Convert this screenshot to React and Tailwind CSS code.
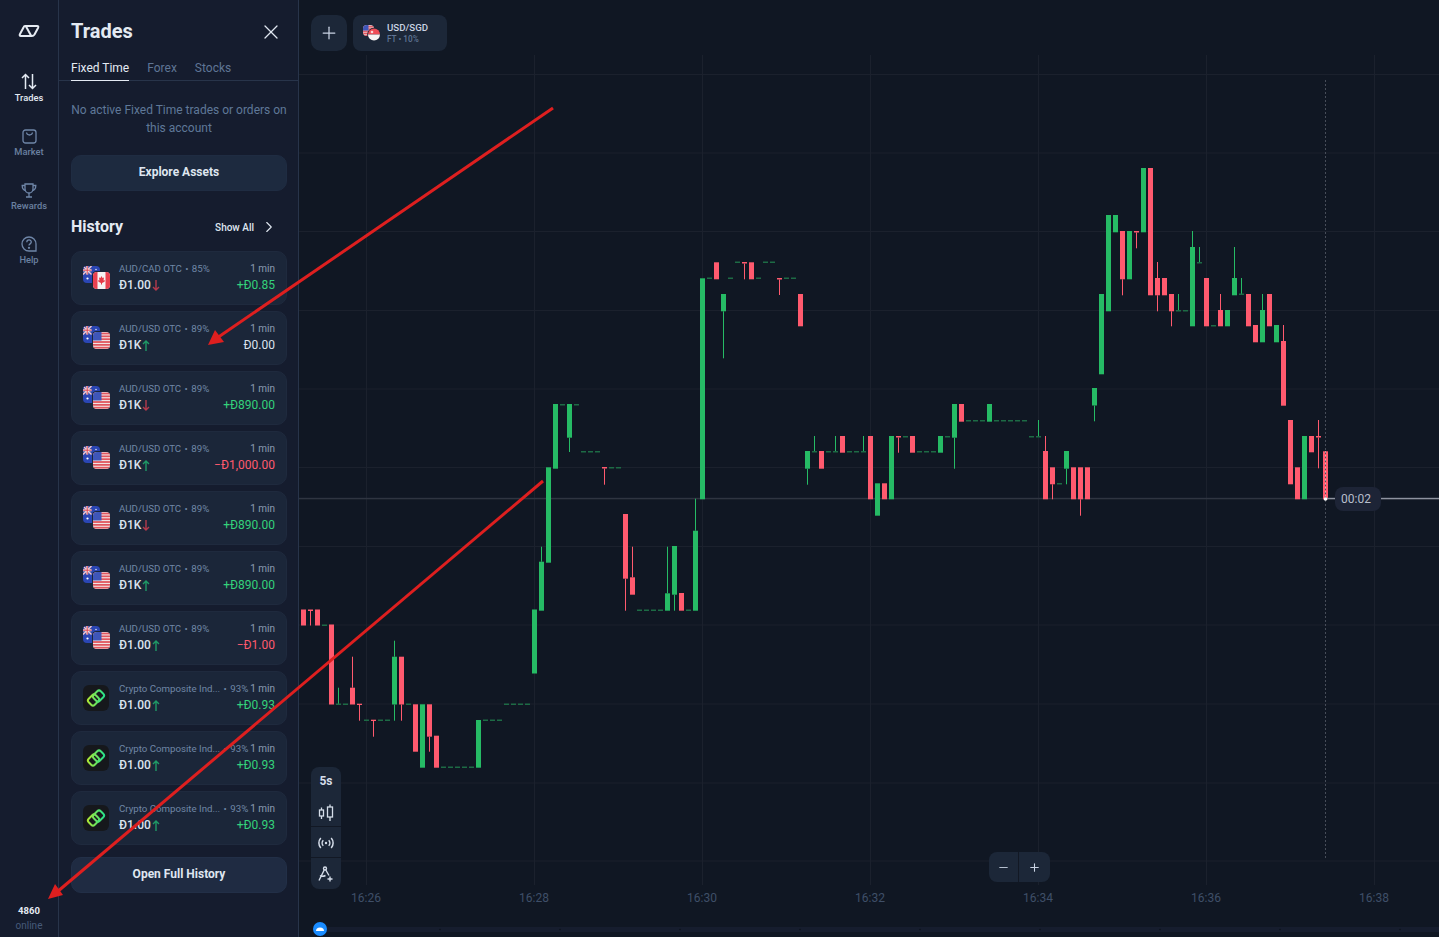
import { X, Plus, Minus, ChevronRight } from "lucide-react";

const GREEN = "#26bb65";
const RED = "#ff5a6e";
const DASH = "#1d6b45";

// [index, type, top, bottom, wickTop, wickBottom] - x is 366 + 7 * index
const candles = [
  [-9, "r", 609.5, 625.5], [-8, "r", 609.5, 611, 610, 625.5], [-7, "r", 609.5, 625.5], [-6, "d", 625],
  [-5, "r", 624.5, 704.5], [-4, "d", 704, 0, 687.7], [-3, "d", 704], [-2, "r", 687.7, 704.5, 656.7],
  [-1, "r", 703.7, 705, 0, 720.7], [0, "d", 720], [1, "r", 719.7, 721, 0, 736.7], [2, "d", 720], [3, "d", 720],
  [4, "g", 656.7, 704.5, 640.7, 720.7], [5, "r", 656.7, 704.5, 0, 720.7], [6, "d", 704],
  [7, "r", 704.3, 751.7], [8, "g", 704.3, 767.7], [9, "r", 704.3, 736.7, 0, 751.7], [10, "r", 735.7, 767.7],
  [11, "d", 767], [12, "d", 767], [13, "d", 767], [14, "d", 767], [15, "d", 767],
  [16, "g", 720, 767.7], [17, "d", 720], [18, "d", 720], [19, "d", 720],
  [20, "d", 704], [21, "d", 704], [22, "d", 704], [23, "d", 704],
  [24, "g", 609.5, 673.5], [25, "g", 561.7, 610.7, 546.7], [26, "g", 467.3, 562.7], [27, "g", 404, 468.7],
  [28, "d", 404.5], [29, "g", 404, 437.7, 0, 452], [30, "d", 404.5],
  [31, "d", 451.5], [32, "d", 451.5], [33, "d", 451.5],
  [34, "r", 467, 468.5, 0, 484.7], [35, "d", 467.5], [36, "d", 467.5],
  [37, "r", 514, 578.7, 0, 610.7], [38, "r", 577.3, 594.7, 546.7],
  [39, "d", 610], [40, "d", 610], [41, "d", 610], [42, "d", 610],
  [43, "g", 593.3, 610.7, 546.7], [44, "g", 546, 594.7, 0, 610.7], [45, "r", 593, 610.7], [46, "d", 610],
  [47, "g", 530.7, 610.7, 498.7], [48, "g", 278.3, 499.3], [49, "d", 278],
  [50, "r", 262.3, 279.3], [51, "g", 294, 311.3, 0, 358.3], [52, "d", 278], [53, "d", 262],
  [54, "r", 262, 263.5, 0, 279.3], [55, "r", 262.3, 279.3], [56, "d", 278], [57, "d", 262], [58, "d", 262],
  [59, "r", 278, 279.5, 0, 295], [60, "d", 278], [61, "d", 278], [62, "r", 294, 326.3],
  [63, "g", 451, 468.7, 0, 484.7], [64, "d", 451.5, 0, 436], [65, "r", 451, 468.7], [66, "d", 451.5],
  [67, "d", 451.5, 0, 436], [68, "r", 436, 452.7], [69, "d", 451.5], [70, "d", 451.5], [71, "d", 451.5, 0, 436],
  [72, "r", 436, 499.3], [73, "g", 483.3, 515.7], [74, "r", 483.3, 499.3], [75, "g", 436, 499.3],
  [76, "r", 436, 437.5, 0, 452.7], [77, "d", 436.5], [78, "r", 436, 452.7],
  [79, "d", 451.5], [80, "d", 451.5], [81, "d", 451.5], [82, "g", 436, 452.7], [83, "d", 436.5],
  [84, "g", 404, 437.7, 0, 468.7], [85, "r", 404, 421.7], [86, "d", 420.5], [87, "d", 420.5], [88, "d", 420.5],
  [89, "g", 404, 421.7], [90, "d", 420.5], [91, "d", 420.5], [92, "d", 420.5], [93, "d", 420.5], [94, "d", 420.5],
  [95, "d", 436.5], [96, "d", 436.5, 0, 420],
  [97, "r", 451, 499.3, 436], [98, "r", 467.3, 484.3, 0, 499.3], [99, "d", 483.5],
  [100, "g", 451, 468.7, 0, 484.3], [101, "r", 467.3, 499.3], [102, "r", 467.3, 499.3, 0, 515.7], [103, "r", 467.3, 499.3],
  [104, "g", 388, 405.5, 0, 421.3], [105, "g", 294, 374.3], [106, "g", 215, 311.3], [107, "g", 215, 232.3],
  [108, "r", 231, 279.3, 0, 295.3], [109, "g", 231, 279.3], [110, "r", 231, 232.5, 0, 248.3],
  [111, "g", 168, 232.3], [112, "r", 168, 295.3], [113, "r", 278, 295.3, 262, 311.3], [114, "r", 278, 295.3],
  [115, "r", 294, 311.3, 0, 326.3], [116, "d", 310.5, 0, 294], [117, "d", 310.5],
  [118, "g", 247, 326.3, 231], [119, "d", 262.5, 0, 247], [120, "r", 278, 326.3], [121, "d", 325.5],
  [122, "r", 310, 326.3, 294], [123, "g", 310, 326.3], [124, "g", 278, 295.3, 247], [125, "d", 294, 0, 278],
  [126, "r", 294, 326.3], [127, "r", 325, 342.3], [128, "g", 310, 342.3, 294], [129, "r", 294, 326.3],
  [130, "g", 325, 342.3], [131, "r", 341, 405.7, 325], [132, "r", 420, 484.3], [133, "r", 467.3, 499.3],
  [134, "g", 436, 499.3], [135, "r", 436, 452.3], [136, "r", 436, 437.5, 420, 468.3], [137, "r", 451.3, 499.3],
];

const gridY = [74.5, 153, 231.5, 310.5, 389, 467.5, 546.5, 625, 704, 783, 861];
const gridX = [366, 534, 702, 870, 1038, 1206, 1374];
const times = ["16:26", "16:28", "16:30", "16:32", "16:34", "16:36", "16:38"];

const trades = [
  { pair: "AUD/CAD OTC", pct: "85%", stake: "Đ1.00", dir: "down", result: "+Đ0.85", tone: "win", flag: "ca" },
  { pair: "AUD/USD OTC", pct: "89%", stake: "Đ1K", dir: "up", result: "Đ0.00", tone: "flat", flag: "us" },
  { pair: "AUD/USD OTC", pct: "89%", stake: "Đ1K", dir: "down", result: "+Đ890.00", tone: "win", flag: "us" },
  { pair: "AUD/USD OTC", pct: "89%", stake: "Đ1K", dir: "up", result: "−Đ1,000.00", tone: "loss", flag: "us" },
  { pair: "AUD/USD OTC", pct: "89%", stake: "Đ1K", dir: "down", result: "+Đ890.00", tone: "win", flag: "us" },
  { pair: "AUD/USD OTC", pct: "89%", stake: "Đ1K", dir: "up", result: "+Đ890.00", tone: "win", flag: "us" },
  { pair: "AUD/USD OTC", pct: "89%", stake: "Đ1.00", dir: "up", result: "−Đ1.00", tone: "loss", flag: "us" },
  { pair: "Crypto Composite Ind...", pct: "93%", stake: "Đ1.00", dir: "up", result: "+Đ0.93", tone: "win", crypto: true },
  { pair: "Crypto Composite Ind...", pct: "93%", stake: "Đ1.00", dir: "up", result: "+Đ0.93", tone: "win", crypto: true },
  { pair: "Crypto Composite Ind...", pct: "93%", stake: "Đ1.00", dir: "up", result: "+Đ0.93", tone: "win", crypto: true },
];

function UsStripes({ x, y, w, h, id }) {
  return (
    <g>
      <clipPath id={id}>
        <rect x={x} y={y} width={w} height={h} rx="4" />
      </clipPath>
      <g clipPath={`url(#${id})`}>
        <rect x={x} y={y} width={w} height={h} fill="#f4eeee" />
        {[0, 1, 2, 3, 4, 5].map((i) => (
          <rect key={i} x={x} y={y + i * (h / 6) + 0.6} width={w} height={h / 12 + 0.4} fill="#e0575f" />
        ))}
        <rect x={x} y={y} width={w * 0.5} height={h * 0.5} fill="#3f56b8" />
      </g>
    </g>
  );
}

function PairFlag({ second, id }) {
  return (
    <svg width="27" height="23" viewBox="0 0 27 23" className="mt-[-1px] shrink-0">
      <clipPath id={`au-${id}`}>
        <rect x="0" y="0" width="17" height="17" rx="4" />
      </clipPath>
      <g clipPath={`url(#au-${id})`}>
        <rect width="17" height="17" fill="#2b46b4" />
        <rect width="8.5" height="8.5" fill="#3c4fa8" />
        <path d="M0 0L8.5 8.5M8.5 0L0 8.5" stroke="#f2c9cf" strokeWidth="1.4" />
        <path d="M4.2 0V8.5M0 4.2H8.5" stroke="#f4f4f4" strokeWidth="2" />
        <path d="M4.2 0V8.5M0 4.2H8.5" stroke="#e0404f" strokeWidth="1" />
        <circle cx="4.5" cy="12.5" r="1.1" fill="#fff" />
        <circle cx="13" cy="3.5" r="0.7" fill="#fff" />
      </g>
      <rect x="9" y="5" width="18" height="18" rx="4.5" fill="#1b2639" />
      {second === "ca" ? (
        <g>
          <clipPath id={`ca-${id}`}>
            <rect x="10" y="6" width="17" height="17" rx="4" />
          </clipPath>
          <g clipPath={`url(#ca-${id})`}>
            <rect x="10" y="6" width="17" height="17" fill="#f6f2f2" />
            <rect x="10" y="6" width="4.5" height="17" fill="#ea4150" />
            <rect x="22.5" y="6" width="4.5" height="17" fill="#ea4150" />
            <path d="M18.5 10l1 2 1.5-.5-.5 3 1.5-.3-.5 1.5-2.500 1.300v1.500h-1v-1.500l-2.500-1.300-.5-1.500 1.500.3-.5-3 1.500.5z" fill="#e63946" />
          </g>
        </g>
      ) : (
        <UsStripes x={10} y={6} w={17} h={17} id={`us-${id}`} />
      )}
    </svg>
  );
}

function CryptoIcon({ id }) {
  return (
    <div className="flex h-[26px] w-[26px] shrink-0 items-center justify-center rounded-md bg-[#16181c]">
      <svg width="20" height="20" viewBox="0 0 20 20" fill="none">
        <defs>
          <linearGradient id={id} x1="2" y1="17" x2="18" y2="4" gradientUnits="userSpaceOnUse">
            <stop stopColor="#b8e62e" />
            <stop offset="1" stopColor="#1fe08f" />
          </linearGradient>
        </defs>
        <rect x="3.250" y="7" width="8.500" height="10" rx="2.500" transform="rotate(45 7.500 12)" stroke={`url(#${id})`} strokeWidth="2" />
        <rect x="8.250" y="3" width="8.500" height="10" rx="2.500" transform="rotate(45 12.500 8)" stroke={`url(#${id})`} strokeWidth="2" />
      </svg>
    </div>
  );
}

function DirArrow({ dir }) {
  const up = dir === "up";
  return (
    <svg width="8" height="11" viewBox="0 0 8 11" fill="none" className="ml-[1px]" stroke={up ? "#1f9a66" : "#b53a4c"} strokeWidth="1.400">
      {up ? <path d="M4 11V1M1 4l3-3 3 3" /> : <path d="M4 0v10M1 7l3 3 3-3" />}
    </svg>
  );
}

function TradeCard({ trade, index }) {
  const toneClass = trade.tone === "win" ? "text-[#34d27b]" : trade.tone === "loss" ? "text-[#ff5a6e]" : "text-[#dbe3ee]";
  return (
    <div className="flex h-[54px] items-center gap-[9px] rounded-[10px] border border-[#1f2a3e] bg-[#1b2639] pl-[11px] pr-[11px]">
      {trade.crypto ? <CryptoIcon id={`crypto-${index}`} /> : <PairFlag second={trade.flag} id={index} />}
      <div className={`flex min-w-0 flex-1 flex-col gap-[2px] pb-[1px] ${trade.crypto ? "ml-px" : ""}`}>
        <div className="flex h-[13px] items-center justify-between text-[9.7px] leading-[13px]">
          <span className="whitespace-nowrap text-[#7086a6]">
            {trade.pair} <span className="mx-[1px]">•</span> {trade.pct}
          </span>
          <span className="whitespace-nowrap text-[10px] text-[#8c9cb3]">1 min</span>
        </div>
        <div className="flex h-[16px] items-center justify-between text-[12px] leading-[16px]">
          <span className="flex items-center font-medium text-[#dbe3ee]">
            {trade.stake}
            <DirArrow dir={trade.dir} />
          </span>
          <span className={toneClass}>{trade.result}</span>
        </div>
      </div>
    </div>
  );
}

function NavItem({ icon, label, active }) {
  return (
    <div className={`flex h-[54px] w-full flex-col items-center justify-end gap-[1px] text-[9.3px] font-medium leading-[13px] ${active ? "text-[#e4eaf3]" : "text-[#6a80a0]"}`}>
      {icon}
      <span>{label}</span>
    </div>
  );
}

function NavRail() {
  return (
    <aside className="flex h-full w-[59px] shrink-0 flex-col items-center border-r border-[#28344a] bg-[#151c2e]">
      <svg width="22" height="14" viewBox="0 0 22 14" fill="none" stroke="#e6ebf3" strokeWidth="2" strokeLinejoin="round" className="mt-[24px]">
        <path d="M7 2H19Q21 2 20 4L16.500 10.500Q15.500 12 14 12H3Q1 12 2 10L5.500 3.500Q6 2 7 2Z" />
        <path d="M8 2.500L13 11.500" />
      </svg>
      <div className="mt-[12px] flex w-full flex-col">
        <NavItem
          active
          label="Trades"
          icon={
            <svg width="16" height="17" viewBox="0 0 16 17" fill="none" stroke="#e4eaf3" strokeWidth="1.500">
              <path d="M4.500 16V1.500M1 5l3.500-3.500L8 5" />
              <path d="M11.500 1v14.500M8 12l3.500 3.500L15 12" />
            </svg>
          }
        />
        <NavItem
          label="Market"
          icon={
            <svg width="15" height="15" viewBox="0 0 15 15" fill="none" stroke="#6f86a8" strokeWidth="1.300">
              <rect x="1" y="1" width="13" height="13" rx="2.500" />
              <path d="M4.500 3.500c.5 3.300 5.500 3.300 6 0" />
            </svg>
          }
        />
        <NavItem
          label="Rewards"
          icon={
            <svg width="16" height="15" viewBox="0 0 16 15" fill="none" stroke="#6f86a8" strokeWidth="1.300">
              <path d="M4 1h8v5a4 4 0 0 1-8 0Z" />
              <path d="M4 2.500H1.200c0 3 1 4.500 3.300 5M12 2.500h2.800c0 3-1 4.500-3.300 5" />
              <path d="M8 10v3.500M5 14h6" />
            </svg>
          }
        />
        <NavItem
          label="Help"
          icon={
            <svg width="16" height="16" viewBox="0 0 16 16" fill="none" stroke="#6f86a8" strokeWidth="1.300">
              <path d="M8 1a7 7 0 1 0 0 14h7V8a7 7 0 0 0-7-7Z" />
              <path d="M5.800 6.200c0-3 4.500-3 4.500-.1 0 1.800-2.300 1.700-2.300 3.400" />
              <circle cx="8" cy="11.800" r=".5" fill="#6f86a8" />
            </svg>
          }
        />
      </div>
      <div className="mt-auto flex flex-col items-center pb-[4px]">
        <span className="text-[9.5px] font-bold leading-[16px] text-[#e4eaf3]">4860</span>
        <span className="text-[10px] leading-[14px] text-[#465a7a]">online</span>
      </div>
    </aside>
  );
}

function TradesPanel() {
  return (
    <section className="flex h-full w-[240px] shrink-0 flex-col border-r border-[#28344a] bg-[#151c2e]">
      <div className="flex h-[60px] items-center justify-between pl-[12px] pr-[15px] pt-[3px]">
        <h1 className="mt-[-1px] text-[20px] font-bold text-[#e4eaf3]">Trades</h1>
        <X size={24} color="#dfe6f0" strokeWidth={1.300} />
      </div>
      <div className="flex h-[21px] gap-[18px] border-b border-[#28344a] pl-[12px] text-[12px] leading-[17px]">
        <span className="h-[21px] border-b border-[#e4eaf3] text-[#e4eaf3]">Fixed Time</span>
        <span className="text-[#5f7595]">Forex</span>
        <span className="text-[#5f7595]">Stocks</span>
      </div>
      <div className="flex flex-col px-[12px] pr-[11px]">
        <p className="mt-[20px] text-center text-[12px] leading-[18px] text-[#5f7898]">
          No active Fixed Time trades or orders on this account
        </p>
        <button className="mt-[18px] h-[36px] rounded-[10px] border border-[#1f2c42] bg-[#1d2a3f] pb-[2px] text-[12px] font-bold text-[#dfe6f0]">
          Explore Assets
        </button>
        <div className="mt-[23px] flex h-[26px] items-center justify-between">
          <h2 className="text-[16px] font-bold text-[#e4eaf3]">History</h2>
          <span className="flex items-center gap-[6px] pr-[9px] text-[10px] font-medium text-[#dfe6f0]">
            Show All
            <ChevronRight size={18} color="#dfe6f0" strokeWidth={1.500} />
          </span>
        </div>
        <div className="mt-[11px] flex flex-col gap-[6px]">
          {trades.map((trade, i) => (
            <TradeCard key={i} trade={trade} index={i} />
          ))}
        </div>
        <button className="mt-[12px] h-[36px] rounded-[10px] border border-[#222f47] bg-[#1f2b42] pb-[2px] text-[12px] font-bold text-[#dfe6f0]">
          Open Full History
        </button>
      </div>
    </section>
  );
}

function PriceChart() {
  return (
    <svg className="absolute inset-0 h-full w-full" viewBox="299 0 1140 937">
      {gridY.map((y) => (
        <rect key={y} x="299" y={y - 0.5} width="1140" height="1" fill="#1b212d" />
      ))}
      {gridX.map((x) => (
        <rect key={x} x={x} y="55" width="1" height="830" fill="#1b212d" />
      ))}
      <rect x="299" y="497.800" width="1027" height="1.500" fill="#2f3541" />
      {candles.map(([k, type, top, bottom, wickTop, wickBottom]) => {
        const cx = 366 + 7 * k;
        const color = type === "g" ? GREEN : type === "r" ? RED : GREEN;
        return (
          <g key={k}>
            {wickTop ? <rect x={cx} y={wickTop} width="1" height={top - wickTop} fill={color} /> : null}
            {wickBottom ? <rect x={cx} y={bottom} width="1" height={wickBottom - bottom} fill={color} /> : null}
            {type === "d" ? (
              <rect x={cx - 2} y={top - 0.5} width="5" height="1.500" fill={DASH} />
            ) : (
              <rect x={cx - 2} y={top} width="5" height={bottom - top} fill={color} />
            )}
          </g>
        );
      })}
      <path d="M1325.500 80V860" stroke="#474d59" strokeDasharray="2 2" />
      <path d="M1325.500 451V499" stroke="#ffffff" strokeOpacity="0.4" strokeDasharray="2 2" />
      <rect x="1326" y="497.800" width="10" height="1.500" fill="#8e939f" />
      <rect x="1381" y="497.800" width="58" height="1.500" fill="#8e939f" />
      <circle cx="1325.500" cy="499" r="1.800" fill="#fff" />
      {times.map((t, i) => (
        <text key={t} x={gridX[i]} y="902" textAnchor="middle" fontSize="12" fill="#3f4f68" fontFamily="Roboto, sans-serif">
          {t}
        </text>
      ))}
      <rect x="320" y="927" width="1119" height="5" fill="#161d2e" />
      {[440, 560, 680, 800, 920, 1040, 1160, 1280, 1400].map((x) => (
        <circle key={x} cx={x} cy="929.500" r="0.800" fill="#0c111b" />
      ))}
    </svg>
  );
}

function ChartTools() {
  return (
    <div className="absolute bottom-[48px] left-[12px] flex w-[30px] flex-col rounded-lg bg-[#1c2738]">
      <div className="flex h-[30px] items-center justify-center pb-[2px] text-[12px] font-bold text-[#d5dde9]">5s</div>
      <div className="flex h-[30px] items-center justify-center border-b border-[#121824] pt-[2px]">
        <svg width="16" height="18" viewBox="0 0 16 18" fill="none" stroke="#d5dde9" strokeWidth="1.300">
          <rect x="1.500" y="6" width="4" height="6" />
          <path d="M3.500 3.500V6M3.500 12v3" />
          <rect x="9.500" y="3" width="5" height="10" />
          <path d="M12 0.500V3M12 13v4" />
        </svg>
      </div>
      <div className="flex h-[31px] items-center justify-center border-b border-[#121824] pt-[2px]">
        <svg width="16" height="12" viewBox="0 0 16 12" fill="none" stroke="#d5dde9" strokeWidth="1.500">
          <circle cx="8" cy="6" r="1.200" fill="#d5dde9" stroke="none" />
          <path d="M5.300 3.200a4 4 0 0 0 0 5.600M10.700 3.200a4 4 0 0 1 0 5.600" />
          <path d="M2.800 1a7.500 7.500 0 0 0 0 10M13.200 1a7.500 7.500 0 0 1 0 10" />
        </svg>
      </div>
      <div className="flex h-[31px] items-center justify-center">
        <svg width="16" height="18" viewBox="0 0 16 18" fill="none" stroke="#d5dde9" strokeWidth="1.400">
          <circle cx="7" cy="3.500" r="1.500" />
          <path d="M6.200 5L1 15.500M7.800 5L11 10.500M2 10.500c1.500 1 3.500 1 5.500 0" />
          <path d="M12 11.500v5M9.500 14h5" />
        </svg>
      </div>
    </div>
  );
}

function ChartArea() {
  return (
    <main className="relative h-full flex-1 bg-[#101723]">
      <PriceChart />
      <div className="absolute left-[12px] top-[15px] flex gap-[6px]">
        <div className="flex h-[36px] w-[36px] items-center justify-center rounded-[10px] bg-[#1c2738]">
          <Plus size={20} color="#c9d3e3" strokeWidth={1.500} />
        </div>
        <div className="flex h-[36px] w-[94px] items-center gap-[6px] rounded-lg bg-[#1c2738] pl-[9px]">
          <svg width="19" height="16" viewBox="0 0 19 16">
            <UsStripes x={1} y={0} w={11} h={11} id="tab-us" />
            <circle cx="12" cy="9.500" r="6.800" fill="#1c2738" />
            <path d="M6 9.500a6 6 0 0 1 12 0Z" fill="#ee4b55" />
            <path d="M6 9.500a6 6 0 0 0 12 0Z" fill="#f5f2f2" />
            <circle cx="10" cy="7" r="1.300" fill="#fbd4d6" />
          </svg>
          <div className="flex flex-col">
            <span className="text-[9.700px] font-medium leading-[13px] text-[#c9d3e3]">USD/SGD</span>
            <span className="text-[8.200px] font-medium leading-[11px] text-[#5f7595]">FT • 10%</span>
          </div>
        </div>
      </div>
      <ChartTools />
      <div className="absolute left-[690px] top-[852px] flex h-[30px] w-[61px] rounded-lg bg-[#1c2738]">
        <div className="flex w-[30px] items-center justify-center border-r border-[#121824]">
          <Minus size={13} color="#b4bfce" strokeWidth={2} />
        </div>
        <div className="flex flex-1 items-center justify-center">
          <Plus size={13} color="#c9d3e3" strokeWidth={2} />
        </div>
      </div>
      <div className="absolute left-[1036px] top-[487px] flex h-[24px] w-[46px] items-center justify-center rounded-lg bg-[#1d2436] pr-[4px] text-[12px] text-[#b8bfcc]">
        00:02
      </div>
      <div className="absolute left-[14px] top-[922px] flex h-[14px] w-[14px] items-center justify-center rounded-full bg-[#1a8cff]">
        <svg width="10" height="6" viewBox="0 0 10 6">
          <path d="M1 5a4 3.500 0 0 1 8 0Z" fill="#fff" />
        </svg>
      </div>
    </main>
  );
}

// red marks somebody drew over the screenshot
function Annotations() {
  return (
    <svg className="pointer-events-none absolute inset-0 z-10 h-full w-full" viewBox="0 0 1439 937">
      <path d="M553 108L217 338" stroke="#de1f1f" strokeWidth="3" />
      <path d="M208 345L215 330L224 342Z" fill="#de1f1f" />
      <path d="M543 481L57 892" stroke="#de1f1f" strokeWidth="3" />
      <path d="M48 899L55 884L63 895Z" fill="#de1f1f" />
    </svg>
  );
}

export default function App() {
  return (
    <div className="relative flex h-[937px] w-full overflow-hidden bg-[#101723] font-['Roboto',sans-serif]">
      <NavRail />
      <TradesPanel />
      <ChartArea />
      <Annotations />
    </div>
  );
}
